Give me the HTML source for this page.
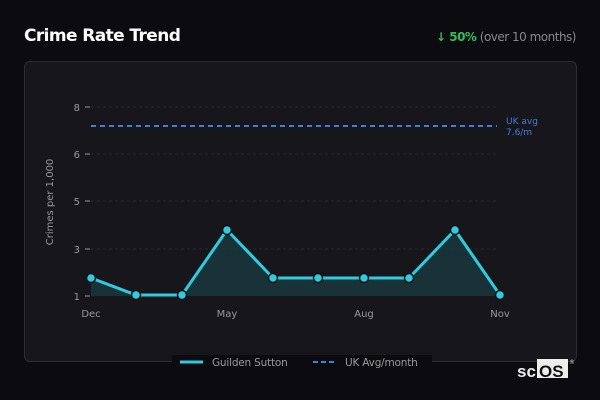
<!DOCTYPE html><html><head><style>
body{margin:0;width:600px;height:400px;background:#0c0c10;font-family:"Liberation Sans","DejaVu Sans",sans-serif;position:relative;overflow:hidden}
.t{position:absolute;left:24px;top:26px;color:#fff;font:bold 17px "DejaVu Sans",sans-serif;letter-spacing:-0.6px}
.r{position:absolute;right:24px;top:30px;font:12px "DejaVu Sans",sans-serif;color:#888;letter-spacing:-0.5px}
.r b{color:#2fbf5a}
.card{position:absolute;left:24px;top:61px;width:551px;height:299px;border:1px solid #2c2c32;border-radius:6px;background:#16161b}
svg{position:absolute;left:0;top:0}
</style></head><body>
<div class="t">Crime Rate Trend</div>
<div class="r"><b>↓ 50%</b> (over 10 months)</div>
<div class="card"></div>
<svg width="600" height="400" font-family="DejaVu Sans,sans-serif">
<g stroke="#26262c" stroke-dasharray="3,3" stroke-width="1">
<line x1="91" x2="497" y1="107" y2="107"/><line x1="91" x2="497" y1="154" y2="154"/><line x1="91" x2="497" y1="201" y2="201"/><line x1="91" x2="497" y1="249" y2="249"/>
</g>
<g fill="#999" font-size="10" text-anchor="end">
<text x="80" y="111">8</text><text x="80" y="158">6</text><text x="80" y="205">5</text><text x="80" y="253">3</text><text x="80" y="300">1</text>
</g>
<g stroke="#999"><line x1="85" x2="90" y1="107" y2="107"/><line x1="85" x2="90" y1="154" y2="154"/><line x1="85" x2="90" y1="201" y2="201"/><line x1="85" x2="90" y1="249" y2="249"/><line x1="85" x2="90" y1="296" y2="296"/></g>
<text transform="translate(53,202) rotate(-90)" fill="#999" font-size="10" text-anchor="middle">Crimes per 1,000</text>
<g fill="#999" font-size="10" text-anchor="middle"><text x="91" y="317">Dec</text><text x="227" y="317">May</text><text x="364" y="317">Aug</text><text x="500" y="317">Nov</text></g>
<line x1="91" x2="497" y1="126" y2="126" stroke="#3f7fd8" stroke-width="2" stroke-dasharray="5,4"/>
<text x="506" y="124" fill="#3f7fd8" font-size="9">UK avg</text><text x="506" y="135" fill="#3f7fd8" font-size="9">7.6/m</text>
<polygon points="91,278 136,295 182,295 227,230 273,278 318,278 364,278 409,278 455,230 500,295 500,296 91,296" fill="#1a3a40" opacity="0.8"/>
<polyline points="91,278 136,295 182,295 227,230 273,278 318,278 364,278 409,278 455,230 500,295" fill="none" stroke="#2bcde0" stroke-width="3" stroke-linejoin="round"/>
<g fill="#2bcde0" stroke="#111" stroke-width="1.5">
<circle cx="91" cy="278" r="4.5"/><circle cx="136" cy="295" r="4.5"/><circle cx="182" cy="295" r="4.5"/><circle cx="227" cy="230" r="4.5"/><circle cx="273" cy="278" r="4.5"/><circle cx="318" cy="278" r="4.5"/><circle cx="364" cy="278" r="4.5"/><circle cx="409" cy="278" r="4.5"/><circle cx="455" cy="230" r="4.5"/><circle cx="500" cy="295" r="4.5"/>
</g>
<rect x="172" y="355" width="260" height="14" fill="#0c0c10"/>
<line x1="180" x2="203" y1="362" y2="362" stroke="#2bcde0" stroke-width="3"/>
<text x="212" y="366" fill="#999" font-size="10.5" letter-spacing="-0.2">Guilden Sutton</text>
<line x1="313" x2="337" y1="362" y2="362" stroke="#3f7fd8" stroke-width="2" stroke-dasharray="5,3"/>
<text x="345" y="366" fill="#999" font-size="10.5" letter-spacing="-0.2">UK Avg/month</text>
<text x="517" y="377" fill="#eee" font-size="17" font-family="Liberation Sans" font-weight="bold">sc</text>
<rect x="537" y="359" width="31" height="19" fill="#eee"/>
<text x="539" y="377" fill="#111" font-size="17" font-family="Liberation Sans" font-weight="bold">OS</text>
<text x="569" y="364" fill="#ccc" font-size="6">®</text>
</svg>
</body></html>
